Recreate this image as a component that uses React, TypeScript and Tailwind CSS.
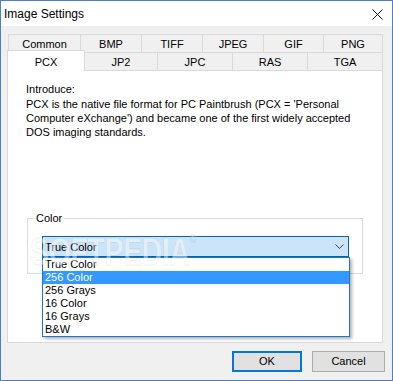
import React from "react";

const font = { fontFamily: '"Liberation Sans", Arial, sans-serif' };

export default function App() {
  const row1 = [
    { t: "Common", w: "w-[72px]" },
    { t: "BMP", w: "w-[61px]" },
    { t: "TIFF", w: "w-[61px]" },
    { t: "JPEG", w: "w-[61px]" },
    { t: "GIF", w: "w-[60px]" },
    { t: "PNG", w: "w-[60px] border-r" },
  ];
  const row2 = [
    { t: "JP2", w: "w-[73px]" },
    { t: "JPC", w: "w-[75px]" },
    { t: "RAS", w: "w-[75px]" },
    { t: "TGA", w: "w-[75px]" },
  ];
  const items = ["True Color", "256 Color", "256 Grays", "16 Color", "16 Grays", "B&W"];
  return (
    <div
      className="w-[393px] h-[381px] flex flex-col border border-[#4b7fcd] bg-[#f0f0f0] text-black overflow-hidden"
      style={font}
    >
      <div className="h-[25px] shrink-0 bg-white flex items-center justify-between pl-[3px] pr-[9px]">
        <span className="text-[12px] leading-none">Image Settings</span>
        <svg width="11" height="11" viewBox="0 0 11 11" className="mt-[1px]">
          <path d="M0.5 0.5 L10.5 10.5 M10.5 0.5 L0.5 10.5" stroke="#111" strokeWidth="1" fill="none" />
        </svg>
      </div>
      <div className="flex-1 flex flex-col px-[6px] pt-[8px]">
        <div className="flex ml-[1px] h-[18px]">
          {row1.map((r) => (
            <div
              key={r.t}
              className={`${r.w} h-[18px] border-l border-t border-[#d9d9d9] bg-[#f0f0f0] flex items-center justify-center text-[11px] pt-[2px]`}
            >
              {r.t}
            </div>
          ))}
        </div>
        <div className="flex h-[18px]">
          <div className="relative z-10 w-[78px] h-[21px] -mt-[2px] bg-white border-l border-t border-r border-[#d9d9d9] flex justify-center text-[11px] pt-[3px]">
            PCX
          </div>
          {row2.map((r) => (
            <div
              key={r.t}
              className={`${r.w} h-[18px] border-r border-t border-[#d9d9d9] bg-[#f0f0f0] flex items-center justify-center text-[11px] pt-[1px]`}
            >
              {r.t}
            </div>
          ))}
        </div>
        <div className="relative w-[376px] h-[273px] bg-white border border-[#d9d9d9] pl-[18px] pt-[11px] text-[11px] leading-[14px]">
          <div className="mb-[1px]">Introduce:</div>
          <div>PCX is the native file format for PC Paintbrush (PCX = 'Personal</div>
          <div>Computer eXchange') and became one of the first widely accepted</div>
          <div>DOS imaging standards.</div>
          <fieldset className="mt-[72px] ml-[1px] w-[336px] border border-[#dcdcdc] pl-[7px] pr-[13px] pb-[16px]">
            <legend className="px-[1px] leading-[14px]">Color</legend>
            <div className="relative mt-[11px] ml-[7px] w-[307px]">
              <div className="h-[21px] bg-[#cce4f7] border border-[#0a64b4] flex items-center justify-between pl-[2px] pr-[4px]">
                <span>True Color</span>
                <svg width="9" height="5" viewBox="0 0 9 5">
                  <path d="M0.5 0.5 L4.5 4.5 L8.5 0.5" stroke="#444" strokeWidth="1" fill="none" />
                </svg>
              </div>
              <div className="absolute left-0 top-[21px] z-20 w-[308px] h-[80px] bg-white border border-[#1e74c9] shadow-[2px_2px_3px_rgba(0,0,0,0.3)] flex flex-col">
                {items.map((it, i) => (
                  <div
                    key={it}
                    className={`h-[13px] leading-[13px] pl-[2px] ${i === 1 ? "bg-[#3399ff] text-white" : ""}`}
                  >
                    {it}
                  </div>
                ))}
              </div>
            </div>
          </fieldset>
          <div className="absolute z-30 left-[22px] top-[162px] origin-left scale-x-75 text-[38px] leading-none font-bold tracking-[-0.5px] text-white/45 [-webkit-text-stroke:1px_rgba(0,0,0,0.08)] pointer-events-none select-none">
            SOFTPEDIA<span className="text-[12px] align-top">®</span>
          </div>
        </div>
        <div className="flex justify-end gap-[10px] mt-[8px] pr-[1px]">
          <button className="w-[70px] h-[21px] bg-[#e1e1e1] border-2 border-[#0078d7] text-[11px] flex items-center justify-center">
            OK
          </button>
          <button className="w-[73px] h-[21px] bg-[#e1e1e1] border border-[#adadad] text-[11px] flex items-center justify-center">
            Cancel
          </button>
        </div>
      </div>
    </div>
  );
}
